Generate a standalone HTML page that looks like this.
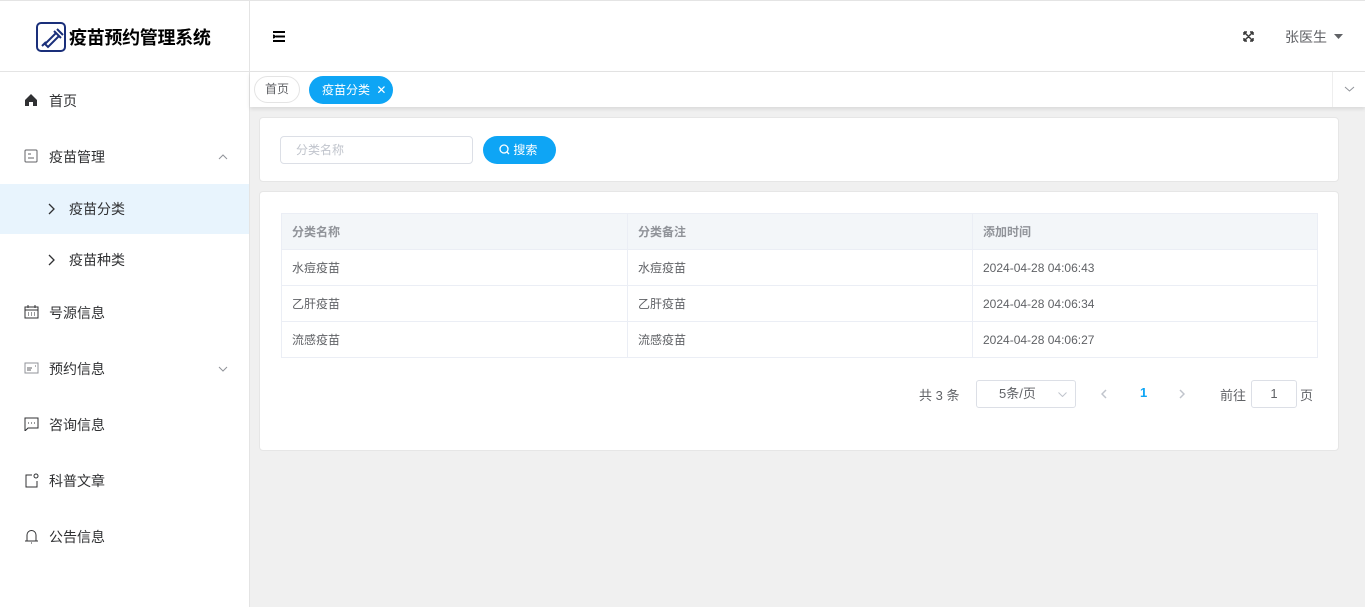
<!DOCTYPE html>
<html><head><meta charset="utf-8"><style>
*{margin:0;padding:0;box-sizing:border-box}
body{width:1365px;height:607px;overflow:hidden;font-family:"Liberation Sans","Noto Sans CJK SC",sans-serif;font-size:14px;color:#303133;background:#f0f0f0;position:relative}
.abs{position:absolute}
#top{left:0;top:0;width:1365px;height:1px;background:#e4e4e4}
#side{left:0;top:1px;width:250px;height:606px;background:#fff;border-right:1px solid #e4e4e4}
#logo{left:0;top:0;width:249px;height:71px;border-bottom:1px solid #e4e4e4}
.mi{position:absolute;left:0;width:249px;height:50px;line-height:50px;font-size:14px;color:#303133}
.mi span{position:absolute;left:49px}
.mi svg{position:absolute;left:24px;top:17px}
#hdr{left:250px;top:1px;width:1115px;height:71px;background:#fff;border-bottom:1px solid #e4e4e4}
#tabs{left:250px;top:72px;width:1115px;height:35px;background:#fff;box-shadow:0 2px 4px rgba(0,0,0,.1)}
.card{background:#fff;border:1px solid #e6e6e6;border-radius:4px}
td,th{border:1px solid #ebeef5;font-size:12px;text-align:left;padding-left:10px;height:36px;font-weight:normal;color:#606266}
th{background:#f3f6f9;color:#909399;font-weight:bold}
table{border-collapse:collapse}
</style></head><body>
<div id="top" class="abs"></div>
<div id="side" class="abs">
 <div id="logo" class="abs">
  <svg class="abs" style="left:36px;top:21px" width="30" height="30" viewBox="0 0 30 30"><rect x="1" y="1" width="28" height="28" rx="4" fill="#fff" stroke="#1a2f7a" stroke-width="2"/><path d="M6 24 L10 20 M9 22 L20 11 L23 14 L12 25 Z M18 9 L25 16 M21 7 L27 13" stroke="#1a2f7a" stroke-width="2" fill="none"/></svg>
  <div class="abs" style="left:69px;top:23px;font-size:18px;font-weight:bold;color:#000;letter-spacing:-.3px">疫苗预约管理系统</div>
 </div>
 <div class="mi" style="top:75px"><svg width="14" height="14" viewBox="0 0 14 14"><path d="M1 7 L7 1 L13 7 V13 H9 V9 H5 V13 H1Z" fill="#303133"/></svg><span>首页</span></div>
 <div class="mi" style="top:131px"><svg width="14" height="14" viewBox="0 0 14 14"><rect x="1" y="1" width="12" height="12" rx="1" fill="none" stroke="#606266"/><path d="M4 5h3M4 9h6" stroke="#606266"/></svg><span>疫苗管理</span><svg style="left:218px;top:22px" width="10" height="6" viewBox="0 0 10 6"><path d="M1 5l4-4 4 4" stroke="#909399" fill="none"/></svg></div>
 <div class="mi" style="top:183px;background:#e8f4fd"><svg style="left:48px;top:19px" width="7" height="12" viewBox="0 0 7 12"><path d="M1 1l5 5-5 5" stroke="#303133" stroke-width="1.3" fill="none"/></svg><span style="left:69px">疫苗分类</span></div>
 <div class="mi" style="top:234px"><svg style="left:48px;top:19px" width="7" height="12" viewBox="0 0 7 12"><path d="M1 1l5 5-5 5" stroke="#303133" stroke-width="1.3" fill="none"/></svg><span style="left:69px">疫苗种类</span></div>
 <div class="mi" style="top:287px"><svg width="15" height="14" viewBox="0 0 15 14"><rect x="1" y="2" width="13" height="11" fill="none" stroke="#303133"/><path d="M1 5h13M4 0v3M11 0v3M4 8h1M7 8h1M10 8h1M4 10h1M7 10h1M10 10h1" stroke="#303133"/></svg><span>号源信息</span></div>
 <div class="mi" style="top:343px"><svg width="15" height="14" viewBox="0 0 15 14"><rect x="1" y="2" width="13" height="10" fill="none" stroke="#909399"/><path d="M3 7h5M3 9h4M11 5h1" stroke="#606266"/></svg><span>预约信息</span><svg style="left:218px;top:22px" width="10" height="6" viewBox="0 0 10 6"><path d="M1 1l4 4 4-4" stroke="#909399" fill="none"/></svg></div>
 <div class="mi" style="top:399px"><svg width="15" height="14" viewBox="0 0 15 14"><path d="M1 1h13v10H4l-3 3z" fill="none" stroke="#303133"/><path d="M4 6h1M7 6h1M10 6h1" stroke="#303133"/></svg><span>咨询信息</span></div>
 <div class="mi" style="top:455px"><svg width="15" height="15" viewBox="0 0 15 15"><path d="M8 2H2v12h11V8" fill="none" stroke="#303133"/><circle cx="12" cy="3" r="2" fill="none" stroke="#303133"/></svg><span>科普文章</span></div>
 <div class="mi" style="top:511px"><svg width="15" height="15" viewBox="0 0 15 15"><path d="M3 12V6a4.5 4.5 0 0 1 9 0v6M1 12h13M7 14h1" fill="none" stroke="#303133"/></svg><span>公告信息</span></div>
</div>
<div id="hdr" class="abs">
 <svg class="abs" style="left:23px;top:30px" width="12" height="11" viewBox="0 0 12 11"><path d="M0 1h12M3 5.5h9M0 10h12M0 4l2 1.5L0 7" stroke="#000" stroke-width="2" fill="none"/></svg>
 <svg class="abs" style="left:993px;top:30px" width="11" height="11" viewBox="0 0 11 11"><path d="M1 1l9 9M10 1l-9 9M1 1h3M1 1v3M10 1h-3M10 1v3M1 10h3M1 10v-3M10 10h-3M10 10v-3" stroke="#3a3a3a" stroke-width="1.5"/></svg>
 <div class="abs" style="left:1035px;top:26px;color:#606266;font-size:14px">张医生</div>
 <svg class="abs" style="left:1084px;top:33px" width="9" height="6" viewBox="0 0 9 6"><path d="M0 0h9L4.5 5z" fill="#606266"/></svg>
</div>
<div id="tabs" class="abs">
 <div class="abs" style="left:4px;top:4px;width:46px;height:27px;border:1px solid #e4e4e4;border-radius:14px;font-size:12px;line-height:25px;text-align:center;color:#606266">首页</div>
 <div class="abs" style="left:59px;top:4px;width:84px;height:28px;background:#0ea5f5;border-radius:14px;font-size:12px;line-height:28px;color:#fff;padding-left:13px">疫苗分类 <span style="margin-left:3px">✕</span></div>
 <div class="abs" style="left:1082px;top:0;width:33px;height:35px;border-left:1px solid #eee"><svg class="abs" style="left:11px;top:14px" width="11" height="6" viewBox="0 0 11 6"><path d="M1 1l4.5 4 4.5-4" stroke="#909399" fill="none"/></svg></div>
</div>
<div class="abs card" style="left:259px;top:117px;width:1080px;height:65px">
 <div class="abs" style="left:20px;top:18px;width:193px;height:28px;border:1px solid #dcdfe6;border-radius:4px;font-size:12px;color:#c0c4cc;line-height:26px;padding-left:15px">分类名称</div>
 <div class="abs" style="left:223px;top:18px;width:73px;height:28px;background:#0ea5f5;border-radius:14px;color:#fff;font-size:12px;line-height:28px;padding-left:16px"><svg width="11" height="11" viewBox="0 0 11 11" style="vertical-align:-1px"><circle cx="5" cy="5" r="4" fill="none" stroke="#fff" stroke-width="1.3"/><path d="M8 8l2 2" stroke="#fff" stroke-width="1.3"/></svg> 搜索</div>
</div>
<div class="abs card" style="left:259px;top:191px;width:1080px;height:260px">
 <table class="abs" style="left:21px;top:21px;width:1037px">
  <tr><th style="width:346px">分类名称</th><th style="width:345px">分类备注</th><th>添加时间</th></tr>
  <tr><td>水痘疫苗</td><td>水痘疫苗</td><td>2024-04-28 04:06:43</td></tr>
  <tr><td>乙肝疫苗</td><td>乙肝疫苗</td><td>2024-04-28 04:06:34</td></tr>
  <tr><td>流感疫苗</td><td>流感疫苗</td><td>2024-04-28 04:06:27</td></tr>
 </table>
 <div class="abs" style="left:659px;top:193px;font-size:13px;color:#606266">共 3 条</div>
 <div class="abs" style="left:716px;top:188px;width:100px;height:28px;border:1px solid #dcdfe6;border-radius:3px;font-size:13px;color:#606266;line-height:26px;padding-left:22px">5条/页<svg class="abs" style="right:8px;top:11px" width="9" height="5" viewBox="0 0 9 5"><path d="M0.5 0.5l4 4 4-4" stroke="#c0c4cc" fill="none"/></svg></div>
 <svg class="abs" style="left:841px;top:197px" width="6" height="10" viewBox="0 0 6 10"><path d="M5 1L1 5l4 4" stroke="#c0c4cc" stroke-width="1.5" fill="none"/></svg>
 <div class="abs" style="left:880px;top:193px;color:#0ea5f5;font-size:13px;font-weight:bold">1</div>
 <svg class="abs" style="left:919px;top:197px" width="6" height="10" viewBox="0 0 6 10"><path d="M1 1l4 4-4 4" stroke="#c0c4cc" stroke-width="1.5" fill="none"/></svg>
 <div class="abs" style="left:960px;top:193px;font-size:13px;color:#606266">前往</div>
 <div class="abs" style="left:991px;top:188px;width:46px;height:28px;border:1px solid #dcdfe6;border-radius:3px;font-size:13px;color:#606266;line-height:26px;text-align:center">1</div>
 <div class="abs" style="left:1040px;top:193px;font-size:13px;color:#606266">页</div>
</div>
</body></html>
